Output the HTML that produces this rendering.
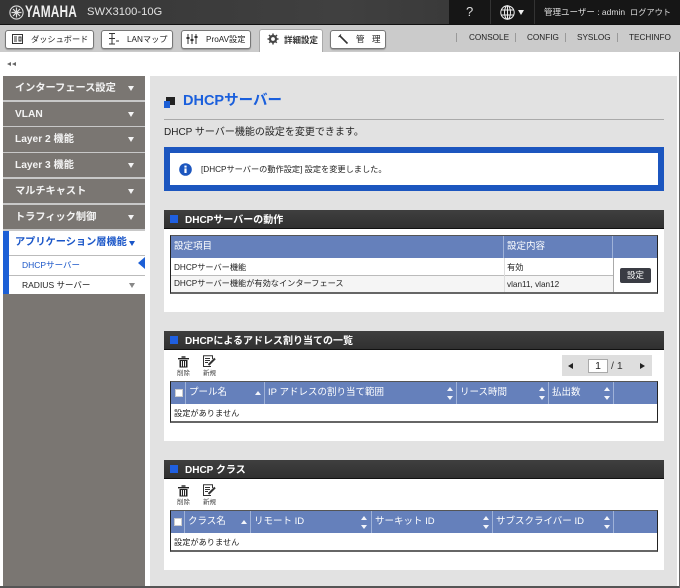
<!DOCTYPE html>
<html lang="ja"><head><meta charset="utf-8"><title>DHCP</title>
<style>
html,body{margin:0;padding:0}
body{position:relative;width:680px;height:588px;overflow:hidden;background:#fff;font-family:"Liberation Sans","Noto Sans CJK JP",sans-serif;color:#222;font-size:9px}
div,span,svg{position:absolute;box-sizing:border-box;white-space:nowrap}
.t{line-height:14px}
.tab{top:30px;height:19px;background:#fff;border:1px solid #777;border-radius:3px;box-shadow:0 1px 1px #999}
.lnk{top:32px;font-size:8.2px;line-height:12px;color:#222}
.sep{top:33px;width:1px;height:9px;background:#999}
.si{left:3px;width:142px;height:24px;background:#7a7672;color:#f4f4f4;font-weight:bold;font-size:10.2px;line-height:25px;padding-left:12px}
.si:after{content:"";position:absolute;left:125px;top:10px;border-left:3.5px solid transparent;border-right:3.5px solid transparent;border-top:5px solid #f4f4f4}
.sh{left:164px;width:500px;height:19px;background:linear-gradient(#3f3f3f,#303030);border-bottom:1px solid #111;color:#fff;font-weight:bold;font-size:10px;line-height:21px;padding-left:21px}
.sh:before{content:"";position:absolute;left:6px;top:5px;width:8px;height:8px;background:#1f5fe0}
.box{left:164px;width:500px;background:#fff}
.tbl{left:170px;width:488px;background:#fff;border:1px solid #222;border-top-color:#555;border-bottom:2px solid #666}
.hd{background:#6580bb;height:22px;top:0;color:#fff;font-size:9.5px;line-height:21px;padding-left:3px;border-right:1px solid #9fb2d8}
.c{font-size:8.2px;line-height:16px;color:#222;padding-left:3px}
.up{width:0;height:0;border-left:3px solid transparent;border-right:3px solid transparent;border-bottom:4px solid #f2f4fa}
.dn{width:0;height:0;border-left:3px solid transparent;border-right:3px solid transparent;border-top:4px solid #f2f4fa}
.small{font-size:6.5px;color:#444;line-height:8px}
.cb{width:8px;height:8px;background:#fff;border:1px solid #ccc;top:7px}
</style></head><body>

<!-- top bar -->
<div style="left:0;top:0;width:680px;height:25px;background:linear-gradient(90deg,#353535,#404040 50%,#3a3a3a 66%);border-bottom:1px solid #111"></div>
<div style="left:449px;top:0;width:231px;height:24px;background:#161616"></div>
<div style="left:490px;top:0;width:1px;height:24px;background:#333"></div>
<div style="left:534px;top:0;width:1px;height:24px;background:#333"></div>
<svg style="left:9px;top:5px" width="15" height="15" viewBox="0 0 15 15" fill="none" stroke="#ddd"><circle cx="7.5" cy="7.5" r="6.6" stroke-width="1.1"/><path d="M7.5 2.5V12.5M2.5 7.5H12.5M4 4L11 11M11 4L4 11" stroke-width="1.2"/></svg>
<div class="t" style="left:25px;top:2px;color:#eee;font-weight:bold;font-size:16.5px;line-height:20px;transform:scaleX(.72);transform-origin:0 0;letter-spacing:.2px">YAMAHA</div>
<div class="t" style="left:87px;top:5px;color:#e2e2e2;font-size:11.2px;line-height:15px">SWX3100-10G</div>
<div class="t" style="left:466px;top:4px;color:#ddd;font-size:13px;line-height:16px">?</div>
<svg style="left:500px;top:5px" width="15" height="15" viewBox="0 0 15 15" fill="none" stroke="#eee" stroke-width="1"><circle cx="7.5" cy="7.5" r="6.7"/><ellipse cx="7.5" cy="7.5" rx="3" ry="6.7"/><path d="M7.5 1V14M1 5H14M1 10H14"/></svg>
<div style="left:518px;top:10px;border-left:3px solid transparent;border-right:3px solid transparent;border-top:5px solid #eee"></div>
<div class="t" style="left:544px;top:5px;color:#ddd;font-size:8.5px">管理ユーザー : admin</div>
<div class="t" style="left:630px;top:6px;color:#ddd;font-size:8.2px">ログアウト</div>

<!-- nav bar -->
<div style="left:0;top:25px;width:680px;height:27px;background:#cbcbcb"></div>
<div class="tab" style="left:5px;width:89px"></div>
<svg style="left:12px;top:34px" width="11" height="10" viewBox="0 0 11 10" fill="none" stroke="#333"><rect x=".5" y=".5" width="10" height="9"/><path d="M2 3H5M2 5H5M2 7H5M7 3H9V7H7Z" stroke-width="1"/></svg>
<div class="t" style="left:31px;top:33px;font-size:8.2px">ダッシュボード</div>
<div class="tab" style="left:101px;width:72px"></div>
<svg style="left:108px;top:33px" width="12" height="12" viewBox="0 0 12 12" fill="none" stroke="#333"><path d="M1 .5H7M4 .5V11M1 5.5H7M1 11H7M8 8H11"/></svg>
<div class="t" style="left:127px;top:33px;font-size:8.2px">LANマップ</div>
<div class="tab" style="left:181px;width:70px"></div>
<svg style="left:186px;top:33px" width="12" height="12" viewBox="0 0 12 12" fill="none" stroke="#333"><path d="M2 1V11M6 1V11M10 1V11" /><path d="M.5 5H3.5M4.5 7H7.5M8.5 4H11.5" stroke-width="2"/></svg>
<div class="t" style="left:206px;top:33px;font-size:8.2px">ProAV設定</div>
<div style="left:259px;top:29px;width:64px;height:23px;background:#fff;border:1px solid #aaa;border-bottom:0;border-radius:3px 3px 0 0"></div>
<svg style="left:267px;top:33px" width="12" height="12" viewBox="0 0 12 12" fill="none" stroke="#444"><circle cx="6" cy="6" r="3" stroke-width="2.2"/><path d="M6 .5V11.5M.5 6H11.5M2 2L10 10M10 2L2 10" stroke-width="1.5" stroke-dasharray="2 7"/></svg>
<div class="t" style="left:284px;top:33px;font-size:8.5px;font-weight:bold;color:#333">詳細設定</div>
<div class="tab" style="left:330px;width:56px"></div>
<svg style="left:338px;top:34px" width="11" height="11" viewBox="0 0 11 11" fill="none" stroke="#333"><path d="M1.5 1.5L3 3L9.5 9.5" stroke-width="1.6"/><path d="M.5 3L3 .5" stroke-width="1"/></svg>
<div class="t" style="left:356px;top:32px;font-size:8.5px">管</div>
<div class="t" style="left:372px;top:32px;font-size:8.5px">理</div>
<div class="sep" style="left:456px"></div>
<div class="lnk" style="left:469px">CONSOLE</div>
<div class="sep" style="left:515px"></div>
<div class="lnk" style="left:527px">CONFIG</div>
<div class="sep" style="left:565px"></div>
<div class="lnk" style="left:577px">SYSLOG</div>
<div class="sep" style="left:617px"></div>
<div class="lnk" style="left:629px">TECHINFO</div>

<!-- collapse -->
<div style="left:7px;top:62px;border-top:2px solid transparent;border-bottom:2px solid transparent;border-right:4px solid #666"></div>
<div style="left:12px;top:62px;border-top:2px solid transparent;border-bottom:2px solid transparent;border-right:4px solid #666"></div>

<!-- sidebar -->
<div style="left:3px;top:76px;width:142px;height:510px;background:#7a7672"></div>
<div style="left:3px;top:100px;width:142px;height:2px;background:#c8c8c8"></div>
<div style="left:3px;top:126px;width:142px;height:1px;background:#c8c8c8"></div>
<div style="left:3px;top:152px;width:142px;height:1px;background:#c8c8c8"></div>
<div style="left:3px;top:177px;width:142px;height:2px;background:#c8c8c8"></div>
<div style="left:3px;top:203px;width:142px;height:2px;background:#c8c8c8"></div>
<div style="left:3px;top:229px;width:142px;height:2px;background:#c8c8c8"></div>
<div class="si" style="top:76px">インターフェース設定</div>
<div class="si" style="top:102px">VLAN</div>
<div class="si" style="top:127px">Layer 2 機能</div>
<div class="si" style="top:153px">Layer 3 機能</div>
<div class="si" style="top:179px">マルチキャスト</div>
<div class="si" style="top:205px">トラフィック制御</div>
<div style="left:3px;top:231px;width:142px;height:63px;background:#fff"></div>
<div style="left:3px;top:231px;width:6px;height:63px;background:#1c5fd6"></div>
<div class="t" style="left:15px;top:235px;color:#1a56c8;font-weight:bold;font-size:10.2px;line-height:15px">アプリケーション層機能</div>
<div style="left:129px;top:241px;border-left:3.5px solid transparent;border-right:3.5px solid transparent;border-top:5px solid #1a56c8"></div>
<div style="left:9px;top:255px;width:136px;height:1px;background:#bbb"></div>
<div style="left:9px;top:275px;width:136px;height:1px;background:#bbb"></div>
<div class="t" style="left:22px;top:258px;color:#1a56c8;font-size:8.5px">DHCPサーバー</div>
<div style="left:138px;top:257px;border-top:6px solid transparent;border-bottom:6px solid transparent;border-right:7px solid #1c5fd6"></div>
<div class="t" style="left:22px;top:278px;color:#222;font-size:8.5px">RADIUS サーバー</div>
<div style="left:129px;top:283px;border-left:3.5px solid transparent;border-right:3.5px solid transparent;border-top:5px solid #888"></div>

<!-- main panel -->
<div style="left:150px;top:76px;width:527px;height:510px;background:#e2e2e2"></div>
<div style="left:0;top:586px;width:680px;height:2px;background:#555"></div>
<div style="left:679px;top:52px;width:1px;height:536px;background:#666"></div>

<div style="left:166px;top:97px;width:9px;height:8px;background:#222"></div>
<div style="left:164px;top:101px;width:6px;height:7px;background:#1c5fd6;border:0"></div>
<div class="t" style="left:183px;top:92px;color:#1a5fdc;font-weight:bold;font-size:14.5px;line-height:19px">DHCPサーバー</div>
<div style="left:164px;top:119px;width:500px;height:1px;background:#aaa"></div>
<div class="t" style="left:164px;top:126px;font-size:10px;color:#222">DHCP サーバー機能の設定を変更できます。</div>

<div style="left:164px;top:147px;width:500px;height:44px;background:#fff;border:6px solid #1c56bf"></div>
<svg style="left:179px;top:163px" width="13" height="13" viewBox="0 0 13 13"><circle cx="6.5" cy="6.5" r="6.3" fill="#1c56bf"/><rect x="5.4" y="5.4" width="2.2" height="4.6" fill="#fff"/><rect x="5.4" y="2.6" width="2.2" height="2" fill="#fff"/></svg>
<div class="t" style="left:201px;top:163px;font-size:8.2px;color:#222">[DHCPサーバーの動作設定] 設定を変更しました。</div>

<!-- Section 1 -->
<div class="box" style="top:229px;height:83px"></div>
<div class="sh" style="top:210px">DHCPサーバーの動作</div>
<div class="tbl" style="top:235px;height:59px"></div>
<div class="hd" style="left:171px;top:236px;width:333px">設定項目</div>
<div class="hd" style="left:504px;top:236px;width:109px">設定内容</div>
<div class="hd" style="left:613px;top:236px;width:44px;border-right:0"></div>
<div style="left:171px;top:275px;width:442px;height:1px;background:#bbb"></div>
<div style="left:171px;top:276px;width:442px;height:16px;background:#f5f5f5"></div>
<div style="left:504px;top:258px;width:1px;height:34px;background:#ddd"></div>
<div style="left:613px;top:258px;width:1px;height:34px;background:#aaa"></div>
<div class="c" style="left:171px;top:260px">DHCPサーバー機能</div>
<div class="c" style="left:171px;top:276px">DHCPサーバー機能が有効なインターフェース</div>
<div class="c" style="left:504px;top:260px">有効</div>
<div class="c" style="left:504px;top:277px">vlan11, vlan12</div>
<div style="left:620px;top:268px;width:31px;height:15px;background:#3a3c44;border-radius:2px;color:#fff;font-size:8.5px;line-height:14px;text-align:center">設定</div>

<!-- Section 2 -->
<div class="box" style="top:349px;height:92px"></div>
<div class="sh" style="top:331px">DHCPによるアドレス割り当ての一覧</div>
<svg style="left:178px;top:356px" width="11" height="12" viewBox="0 0 11 12" fill="#222"><rect x="0" y="2" width="11" height="1.4"/><rect x="3.5" y=".3" width="4" height="1.4"/><path d="M1.5 4H9.5V11.5H1.5ZM3 5V10.5H3.9V5ZM5 5V10.5H6V5ZM7.1 5V10.5H8V5Z" fill-rule="evenodd"/></svg>
<svg style="left:202px;top:355px" width="15" height="13" viewBox="0 0 15 13" fill="none" stroke="#333"><path d="M9 11.5H1.5V.8H10.5V4"/><path d="M3 3.5H8M3 5.5H8M3 7.5H6"/><path d="M6.5 10L13 3.5" stroke-width="2"/></svg>
<div class="small" style="left:177px;top:370px">削除</div>
<div class="small" style="left:203px;top:370px">新規</div>
<div style="left:562px;top:355px;width:90px;height:21px;background:#dedede"></div>
<div style="left:568px;top:363px;border-top:3px solid transparent;border-bottom:3px solid transparent;border-right:5px solid #222"></div>
<div style="left:588px;top:359px;width:20px;height:14px;background:#fff;border:1px solid #aaa;font-size:10.5px;line-height:13px;text-align:center;color:#222">1</div>
<div class="t" style="left:611px;top:359px;font-size:10.5px;color:#333">/ 1</div>
<div style="left:640px;top:363px;border-top:3px solid transparent;border-bottom:3px solid transparent;border-left:5px solid #222"></div>

<div class="tbl" style="top:381px;height:42px"></div>
<div class="hd" style="left:171px;top:382px;width:15px"></div>
<div class="cb" style="left:175px;top:389px"></div>
<div class="hd" style="left:186px;top:382px;width:79px">プール名</div>
<div class="hd" style="left:265px;top:382px;width:192px">IP アドレスの割り当て範囲</div>
<div class="hd" style="left:457px;top:382px;width:92px">リース時間</div>
<div class="hd" style="left:549px;top:382px;width:65px">払出数</div>
<div class="hd" style="left:614px;top:382px;width:43px;border-right:0"></div>
<div class="up" style="left:255px;top:391px"></div>
<div class="up" style="left:447px;top:387px"></div><div class="dn" style="left:447px;top:396px"></div>
<div class="up" style="left:539px;top:387px"></div><div class="dn" style="left:539px;top:396px"></div>
<div class="up" style="left:604px;top:387px"></div><div class="dn" style="left:604px;top:396px"></div>
<div class="c" style="left:171px;top:406px">設定がありません</div>

<!-- Section 3 -->
<div class="box" style="top:478px;height:92px"></div>
<div class="sh" style="top:460px">DHCP クラス</div>
<svg style="left:178px;top:485px" width="11" height="12" viewBox="0 0 11 12" fill="#222"><rect x="0" y="2" width="11" height="1.4"/><rect x="3.5" y=".3" width="4" height="1.4"/><path d="M1.5 4H9.5V11.5H1.5ZM3 5V10.5H3.9V5ZM5 5V10.5H6V5ZM7.1 5V10.5H8V5Z" fill-rule="evenodd"/></svg>
<svg style="left:202px;top:484px" width="15" height="13" viewBox="0 0 15 13" fill="none" stroke="#333"><path d="M9 11.5H1.5V.8H10.5V4"/><path d="M3 3.5H8M3 5.5H8M3 7.5H6"/><path d="M6.5 10L13 3.5" stroke-width="2"/></svg>
<div class="small" style="left:177px;top:499px">削除</div>
<div class="small" style="left:203px;top:499px">新規</div>

<div class="tbl" style="top:510px;height:42px"></div>
<div class="hd" style="left:171px;top:511px;width:14px"></div>
<div class="cb" style="left:174px;top:518px"></div>
<div class="hd" style="left:185px;top:511px;width:66px">クラス名</div>
<div class="hd" style="left:251px;top:511px;width:121px">リモート ID</div>
<div class="hd" style="left:372px;top:511px;width:121px">サーキット ID</div>
<div class="hd" style="left:493px;top:511px;width:121px">サブスクライバー ID</div>
<div class="hd" style="left:614px;top:511px;width:43px;border-right:0"></div>
<div class="up" style="left:241px;top:520px"></div>
<div class="up" style="left:361px;top:516px"></div><div class="dn" style="left:361px;top:525px"></div>
<div class="up" style="left:483px;top:516px"></div><div class="dn" style="left:483px;top:525px"></div>
<div class="up" style="left:604px;top:516px"></div><div class="dn" style="left:604px;top:525px"></div>
<div class="c" style="left:171px;top:535px">設定がありません</div>

</body></html>
